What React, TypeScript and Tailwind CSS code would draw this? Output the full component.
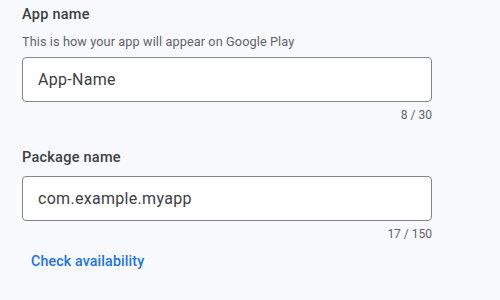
import React from "react";

export default function App() {
  return (
    <div className="w-[500px] h-[300px] bg-[#f8f9fc] overflow-hidden" style={{ fontFamily: "Roboto, 'Noto Sans', sans-serif" }}>
      <div className="ml-[22px] w-[410px] flex flex-col">
        <div className="pt-[5px] text-[14.5px] leading-[20px] font-medium tracking-[0.25px] text-[#3c4043]">App name</div>
        <div className="mt-[9px] text-[12.7px] leading-[16px] tracking-[0.1px] text-[#5f6368]">This is how your app will appear on Google Play</div>
        <div className="mt-[7px] h-[45px] border border-[#80868b] rounded-[4px] bg-white flex items-center pl-[15px] text-[16px] tracking-[0.3px] text-[#3c4043]">
          App-Name
        </div>
        <div className="mt-[5px] text-right text-[12px] leading-[16px] text-[#5f6368]">8 / 30</div>

        <div className="mt-[25px] text-[14.5px] leading-[20px] font-medium tracking-[0.25px] text-[#3c4043]">Package name</div>
        <div className="mt-[8px] h-[45px] border border-[#80868b] rounded-[4px] bg-white flex items-center pl-[15px] text-[16px] tracking-[0.3px] text-[#3c4043]">
          com.example.myapp
        </div>
        <div className="mt-[5px] text-right text-[12px] leading-[16px] text-[#5f6368]">17 / 150</div>

        <div className="mt-[9px] pl-[9px] text-[14.2px] leading-[20px] font-medium tracking-[0.15px] text-[#1a73e8]">Check availability</div>
      </div>
    </div>
  );
}
